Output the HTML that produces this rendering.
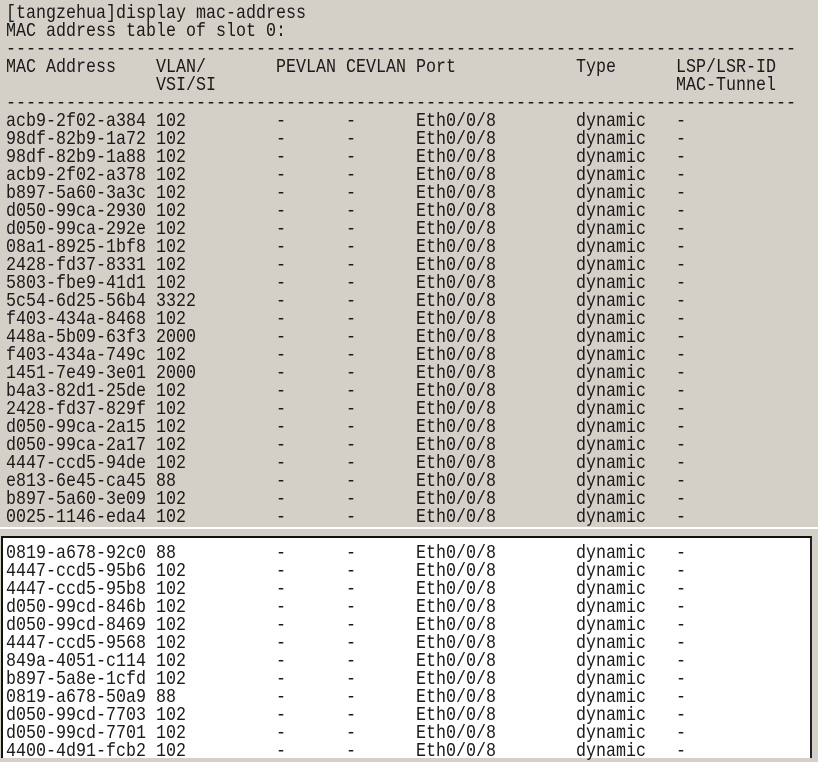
<!DOCTYPE html>
<html><head><style>
body{margin:0;width:818px;height:751px;overflow:hidden;background:#d4d0c8;position:relative}
pre{margin:0;font-family:"Liberation Mono",monospace;font-size:19px;line-height:18px;color:#1a1a1a;position:absolute;left:6px;white-space:pre;transform:scaleX(0.877);transform-origin:0 0}
#a{top:4px}
#box{position:absolute;left:1px;top:536px;width:807px;height:220px;background:#fff;border-top:2px solid #111;border-left:2px solid #111;border-right:2px solid #222}
#hl{position:absolute;left:0;top:527px;width:818px;height:2px;background:#fff}
#b{top:544px}
</style></head><body>
<pre id="a">[tangzehua]display mac-address
MAC address table of slot 0:
-------------------------------------------------------------------------------
MAC Address    VLAN/       PEVLAN CEVLAN Port            Type      LSP/LSR-ID
               VSI/SI                                              MAC-Tunnel
-------------------------------------------------------------------------------
acb9-2f02-a384 102         -      -      Eth0/0/8        dynamic   -
98df-82b9-1a72 102         -      -      Eth0/0/8        dynamic   -
98df-82b9-1a88 102         -      -      Eth0/0/8        dynamic   -
acb9-2f02-a378 102         -      -      Eth0/0/8        dynamic   -
b897-5a60-3a3c 102         -      -      Eth0/0/8        dynamic   -
d050-99ca-2930 102         -      -      Eth0/0/8        dynamic   -
d050-99ca-292e 102         -      -      Eth0/0/8        dynamic   -
08a1-8925-1bf8 102         -      -      Eth0/0/8        dynamic   -
2428-fd37-8331 102         -      -      Eth0/0/8        dynamic   -
5803-fbe9-41d1 102         -      -      Eth0/0/8        dynamic   -
5c54-6d25-56b4 3322        -      -      Eth0/0/8        dynamic   -
f403-434a-8468 102         -      -      Eth0/0/8        dynamic   -
448a-5b09-63f3 2000        -      -      Eth0/0/8        dynamic   -
f403-434a-749c 102         -      -      Eth0/0/8        dynamic   -
1451-7e49-3e01 2000        -      -      Eth0/0/8        dynamic   -
b4a3-82d1-25de 102         -      -      Eth0/0/8        dynamic   -
2428-fd37-829f 102         -      -      Eth0/0/8        dynamic   -
d050-99ca-2a15 102         -      -      Eth0/0/8        dynamic   -
d050-99ca-2a17 102         -      -      Eth0/0/8        dynamic   -
4447-ccd5-94de 102         -      -      Eth0/0/8        dynamic   -
e813-6e45-ca45 88          -      -      Eth0/0/8        dynamic   -
b897-5a60-3e09 102         -      -      Eth0/0/8        dynamic   -
0025-1146-eda4 102         -      -      Eth0/0/8        dynamic   -</pre>
<div id="hl"></div>
<div id="box"></div>
<pre id="b">0819-a678-92c0 88          -      -      Eth0/0/8        dynamic   -
4447-ccd5-95b6 102         -      -      Eth0/0/8        dynamic   -
4447-ccd5-95b8 102         -      -      Eth0/0/8        dynamic   -
d050-99cd-846b 102         -      -      Eth0/0/8        dynamic   -
d050-99cd-8469 102         -      -      Eth0/0/8        dynamic   -
4447-ccd5-9568 102         -      -      Eth0/0/8        dynamic   -
849a-4051-c114 102         -      -      Eth0/0/8        dynamic   -
b897-5a8e-1cfd 102         -      -      Eth0/0/8        dynamic   -
0819-a678-50a9 88          -      -      Eth0/0/8        dynamic   -
d050-99cd-7703 102         -      -      Eth0/0/8        dynamic   -
d050-99cd-7701 102         -      -      Eth0/0/8        dynamic   -
4400-4d91-fcb2 102         -      -      Eth0/0/8        dynamic   -</pre>
</body></html>
